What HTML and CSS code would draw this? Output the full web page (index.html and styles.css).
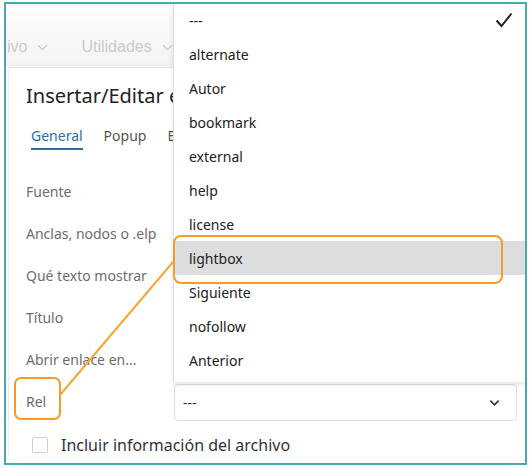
FILE: index.html
```html
<!DOCTYPE html>
<html lang="es">
<head>
  <meta charset="UTF-8">
  <title>Insertar/Editar enlace</title>
  <link rel="stylesheet" href="styles.css">
</head>
<body>
<div class="frame">

  <!-- barra de menús (desenfocada detrás del diálogo) -->
  <div class="menubar">
    <span class="menu-item">ivo
      <svg class="menu-caret" viewBox="0 0 12 8"><path d="M1 1.5l5 5 5-5"/></svg>
    </span>
    <span class="menu-item">Utilidades
      <svg class="menu-caret" viewBox="0 0 12 8"><path d="M1 1.5l5 5 5-5"/></svg>
    </span>
  </div>

  <!-- diálogo -->
  <div class="dialog">
    <h1 class="dialog-title">Insertar/Editar e</h1>

    <div class="tabs">
      <span class="tab active">General</span>
      <span class="tab">Popup</span>
      <span class="tab">E</span>
    </div>

    <div class="form">
      <div class="form-row">
        <label>Fuente</label>
        <div class="field"></div>
      </div>
      <div class="form-row">
        <label>Anclas, nodos o .elp</label>
        <div class="field"></div>
      </div>
      <div class="form-row">
        <label>Qué texto mostrar</label>
        <div class="field"></div>
      </div>
      <div class="form-row">
        <label>Título</label>
        <div class="field"></div>
      </div>
      <div class="form-row">
        <label>Abrir enlace en...</label>
        <div class="field"></div>
      </div>
      <div class="form-row">
        <label>Rel</label>
        <div class="field select">
          <span>---</span>
          <svg class="select-caret" viewBox="0 0 12 8"><path d="M1.5 1.5l4.5 4.5 4.5-4.5"/></svg>
        </div>
      </div>
    </div>

    <div class="check-row">
      <span class="checkbox"></span>
      <span class="check-label">Incluir información del archivo</span>
    </div>
  </div>

  <!-- lista desplegable del campo Rel -->
  <ul class="dropdown">
    <li class="option">---
      <svg class="tick" viewBox="0 0 18 16"><path d="M1.5 8.5l5 5.5 10-12.5"/></svg>
    </li>
    <li class="option">alternate</li>
    <li class="option">Autor</li>
    <li class="option">bookmark</li>
    <li class="option">external</li>
    <li class="option">help</li>
    <li class="option">license</li>
    <li class="option hover">lightbox</li>
    <li class="option">Siguiente</li>
    <li class="option">nofollow</li>
    <li class="option">Anterior</li>
  </ul>

  <!-- anotaciones -->
  <div class="mark mark-option"></div>
  <div class="mark mark-label"></div>
  <svg class="mark-line" width="200" height="160" viewBox="0 0 200 160">
    <line x1="54" y1="137" x2="167" y2="4"/>
  </svg>
</div>
</body>
</html>
```

FILE: styles.css
```css
/* base */
html, body {
  margin: 0;
  padding: 0;
  background: #fff;
  font-family: "Noto Sans", "Open Sans", sans-serif;
}

/* marco turquesa */
.frame {
  position: relative;
  width: 519px;
  height: 459px;
  margin: 2px 0 0 4px;
  border: 2px solid #4aa8b1;
  overflow: hidden;
  background: #fff;
}

/* barra de menús */
.menubar {
  height: 62px;
  display: flex;
  align-items: flex-end;
  gap: 33px;
  padding: 0 0 10px 1px;
  box-sizing: border-box;
  background: linear-gradient(#fdfdfd, #f4f4f4);
}
.menu-item {
  display: flex;
  align-items: center;
  gap: 10px;
  font-family: "Liberation Sans", sans-serif;
  font-size: 16px;
  color: #c9cbcd;
}
.menu-caret {
  width: 11px;
  height: 7px;
  fill: none;
  stroke: #c9cbcd;
  stroke-width: 1.5;
}

/* diálogo */
.dialog {
  margin: 1px 0 0 2px;
  padding: 13px 0 0 17px;
  border-top: 1px solid #e4e4e4;
  border-left: 1px solid #ececec;
  box-shadow: 0 -1px 4px rgba(0, 0, 0, 0.05);
  background: #fff;
}
.dialog-title {
  margin: 0;
  font-size: 20px;
  font-weight: 400;
  line-height: 30px;
  color: #222;
  white-space: nowrap;
}

/* pestañas */
.tabs {
  display: flex;
  gap: 21px;
  margin: 15px 0 0 5px;
  font-size: 14px;
}
.tab {
  padding-bottom: 3px;
  color: #555;
  border-bottom: 2px solid transparent;
}
.tab.active {
  color: #2e6da4;
  border-bottom-color: #2e6da4;
}

/* formulario */
.form {
  display: flex;
  flex-direction: column;
  gap: 5px;
  margin-top: 24px;
}
.form-row {
  display: flex;
  align-items: center;
  height: 37px;
}
.form-row label {
  width: 148px;
  font-size: 14px;
  color: #6d6d6d;
  padding-bottom: 3px;
}
.field {
  width: 343px;
  height: 37px;
  box-sizing: border-box;
  border: 1px solid #dedede;
  border-radius: 4px;
}
.select {
  display: flex;
  align-items: center;
  justify-content: space-between;
  padding: 0 16px 0 8px;
  font-size: 14px;
  color: #333;
}
.select-caret {
  width: 11px;
  height: 8px;
  fill: none;
  stroke: #333;
  stroke-width: 1.8;
}

/* casilla */
.check-row {
  display: flex;
  align-items: center;
  gap: 13px;
  margin: 13px 0 0 6px;
}
.checkbox {
  width: 16px;
  height: 16px;
  box-sizing: border-box;
  border: 1px solid #cfcfcf;
  border-radius: 2px;
}
.check-label {
  font-size: 16px;
  color: #333;
}

/* lista desplegable */
.dropdown {
  position: absolute;
  left: 167px;
  top: -1px;
  width: 356px;
  margin: 0;
  padding: 0 0 5px;
  list-style: none;
  background: #fff;
  border-left: 1px solid #e2e2e2;
  box-shadow: 0 2px 5px rgba(0, 0, 0, 0.12);
}
.option {
  display: flex;
  align-items: center;
  justify-content: space-between;
  height: 34px;
  padding: 0 15px;
  font-size: 14px;
  color: #222;
}
.option.hover {
  background: #dcdddf;
}
.tick {
  width: 18px;
  height: 16px;
  margin-right: 2px;
  fill: none;
  stroke: #222;
  stroke-width: 2;
}

/* anotaciones naranjas */
.mark {
  position: absolute;
  border: 2.5px solid #f39d26;
  box-sizing: border-box;
}
.mark-option {
  left: 167px;
  top: 231px;
  width: 330px;
  height: 49px;
  border-radius: 8px;
}
.mark-label {
  left: 8px;
  top: 373px;
  width: 47px;
  height: 43px;
  border-radius: 7px;
}
.mark-line {
  position: absolute;
  left: 0;
  top: 254px;
}
.mark-line line {
  stroke: #f5a634;
  stroke-width: 2;
}
```
